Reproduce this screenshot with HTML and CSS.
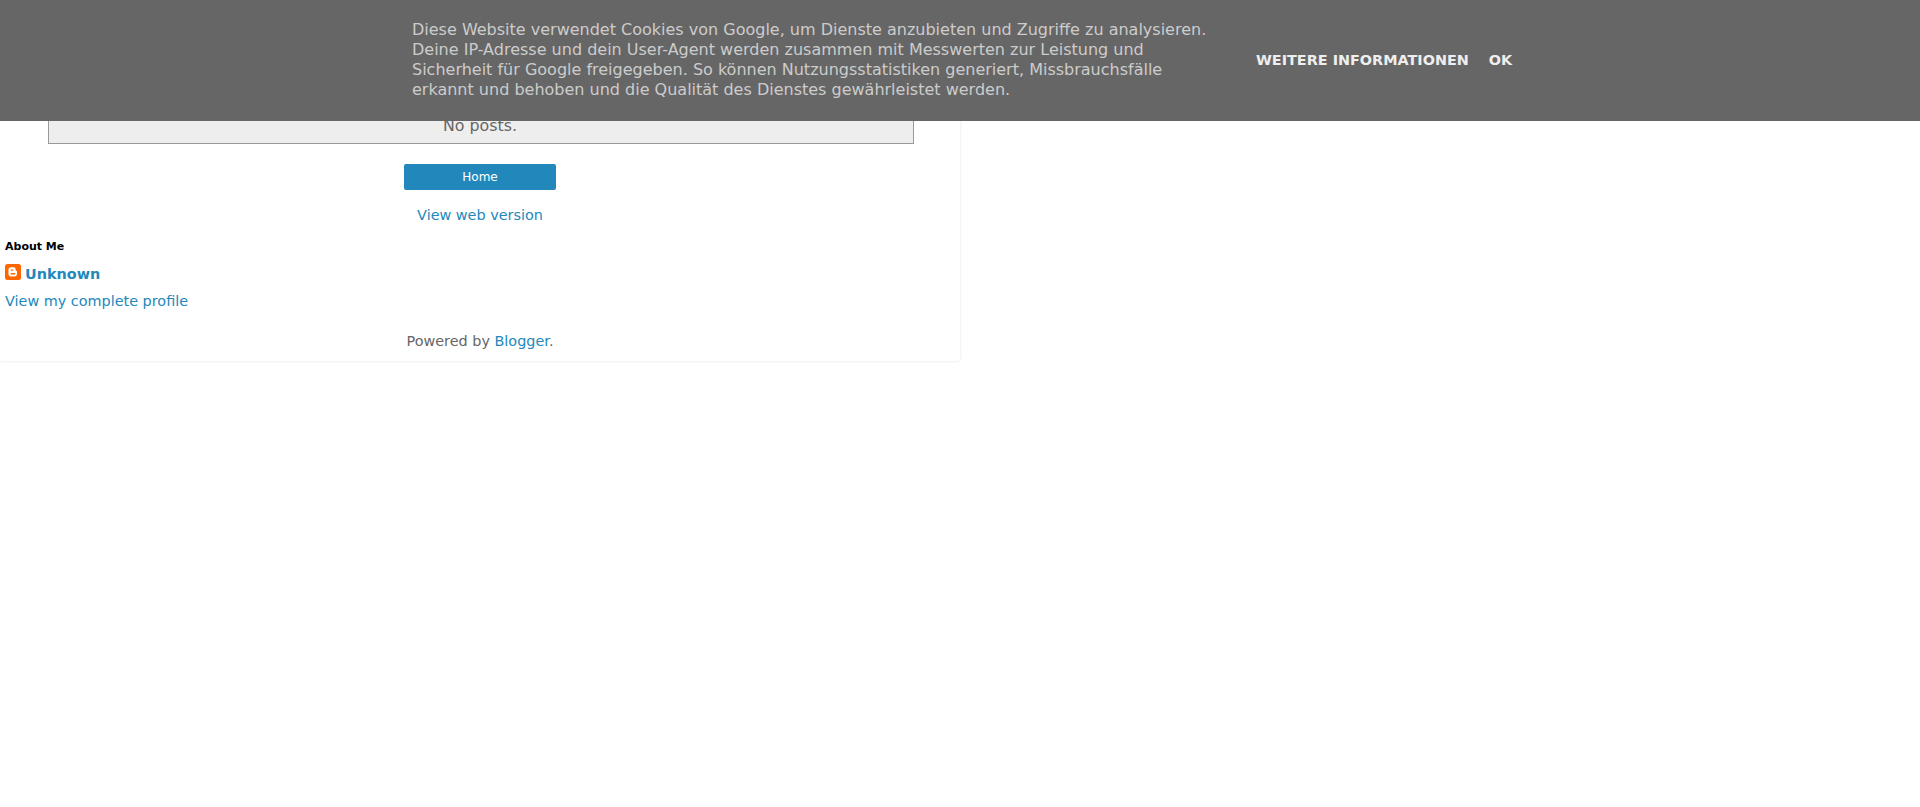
FILE: index.html
```html
<!DOCTYPE html>
<html lang="de">
<head>
<meta charset="utf-8">
<title>Blog</title>
<link rel="stylesheet" href="styles.css">
</head>
<body>
<div class="cookie-bar">
  <span class="cookie-info">Diese Website verwendet Cookies von Google, um Dienste anzubieten und Zugriffe zu analysieren. Deine IP-Adresse und dein User-Agent werden zusammen mit Messwerten zur Leistung und Sicherheit für Google freigegeben. So können Nutzungsstatistiken generiert, Missbrauchsfälle erkannt und behoben und die Qualität des Dienstes gewährleistet werden.</span>
  <span class="cookie-actions">
    <a class="cookie-link" href="#">Weitere Informationen</a>
    <a class="cookie-link" href="#">OK</a>
  </span>
</div>
<main class="card">
  <div class="status-box">No posts.</div>
  <div class="home-row"><a class="home-button" href="#">Home</a></div>
  <div class="web-version"><a href="#">View web version</a></div>
  <section class="about">
    <h2 class="about-title">About Me</h2>
    <div class="author">
      <svg class="blogger-icon" viewBox="0 0 16 16" width="16" height="16" aria-hidden="true">
        <rect width="16" height="16" rx="2.5" fill="#ff6600"/>
        <path d="M6 3.200h2.600c1.200 0 2 .8 2 1.900v1c0 .4.3.7.7.7h.1c.3 0 .6.2.6.6v2.500c0 1.400-1.100 2.500-2.500 2.500H6c-1.400 0-2.500-1.100-2.500-2.500V5.700C3.500 4.300 4.600 3.200 6 3.200z" fill="#fff"/>
        <rect x="5.600" y="5.400" width="2.800" height="1.300" rx=".65" fill="#ff6600"/>
        <rect x="5.600" y="9.100" width="4.800" height="1.300" rx=".65" fill="#ff6600"/>
      </svg>
      <a class="author-name" href="#">Unknown</a>
    </div>
    <a class="profile-link" href="#">View my complete profile</a>
  </section>
  <div class="attribution">Powered by <a href="#">Blogger</a>.</div>
</main>
</body>
</html>
```

FILE: styles.css
```css
html, body {
  margin: 0;
  padding: 0;
  background: #fff;
  overflow: hidden;
}
body {
  font-family: "DejaVu Sans", sans-serif;
  font-size: 14.4px;
  color: #666;
  height: 807px;
}
a {
  color: #2288bb;
  text-decoration: none;
}
.cookie-bar {
  position: fixed;
  top: 0;
  left: 0;
  right: 0;
  height: 121px;
  box-sizing: border-box;
  background: #666;
  display: flex;
  align-items: center;
  padding: 0 0 2px 412px;
}
.cookie-info {
  width: 800px;
  font-size: 16px;
  line-height: 20px;
  color: #ccc;
}
.cookie-actions {
  display: flex;
  gap: 20px;
  margin-left: 44px;
}
.cookie-link {
  color: #eee;
  font-size: 14.4px;
  font-weight: bold;
  text-transform: uppercase;
}
.card {
  width: 960px;
  height: 361px;
  background: #fff;
  border-radius: 0 0 3px 0;
  box-shadow: 0 0 3px rgba(0, 0, 0, 0.12);
  display: flow-root;
}
.status-box {
  margin: 101px 46px 0 48px;
  height: 43px;
  box-sizing: border-box;
  background: #eee;
  border: 1px solid #999;
  border-top: 0;
  padding-right: 2px;
  text-align: center;
  line-height: 50px;
  font-size: 15.84px;
}
.home-row {
  margin-top: 20px;
  text-align: center;
}
.home-button {
  display: inline-block;
  width: 152px;
  height: 26px;
  line-height: 26px;
  background: #2288bb;
  border-radius: 2px;
  color: #fff;
  font-size: 12px;
}
.web-version {
  text-align: center;
  margin-top: 15px;
  line-height: 20px;
}
.about {
  margin-top: 15px;
  padding-left: 5px;
}
.about-title {
  margin: 0;
  font-size: 11px;
  line-height: 14px;
  color: #000;
  font-weight: bold;
}
.author {
  display: flex;
  align-items: flex-start;
  gap: 4px;
  margin-top: 10px;
}
.author-name {
  font-weight: bold;
  font-size: 14.4px;
  line-height: 20px;
}
.blogger-icon {
  display: block;
}
.profile-link {
  display: block;
  margin-top: 7px;
  line-height: 20px;
}
.attribution {
  text-align: center;
  margin-top: 20px;
  line-height: 20px;
}
```
